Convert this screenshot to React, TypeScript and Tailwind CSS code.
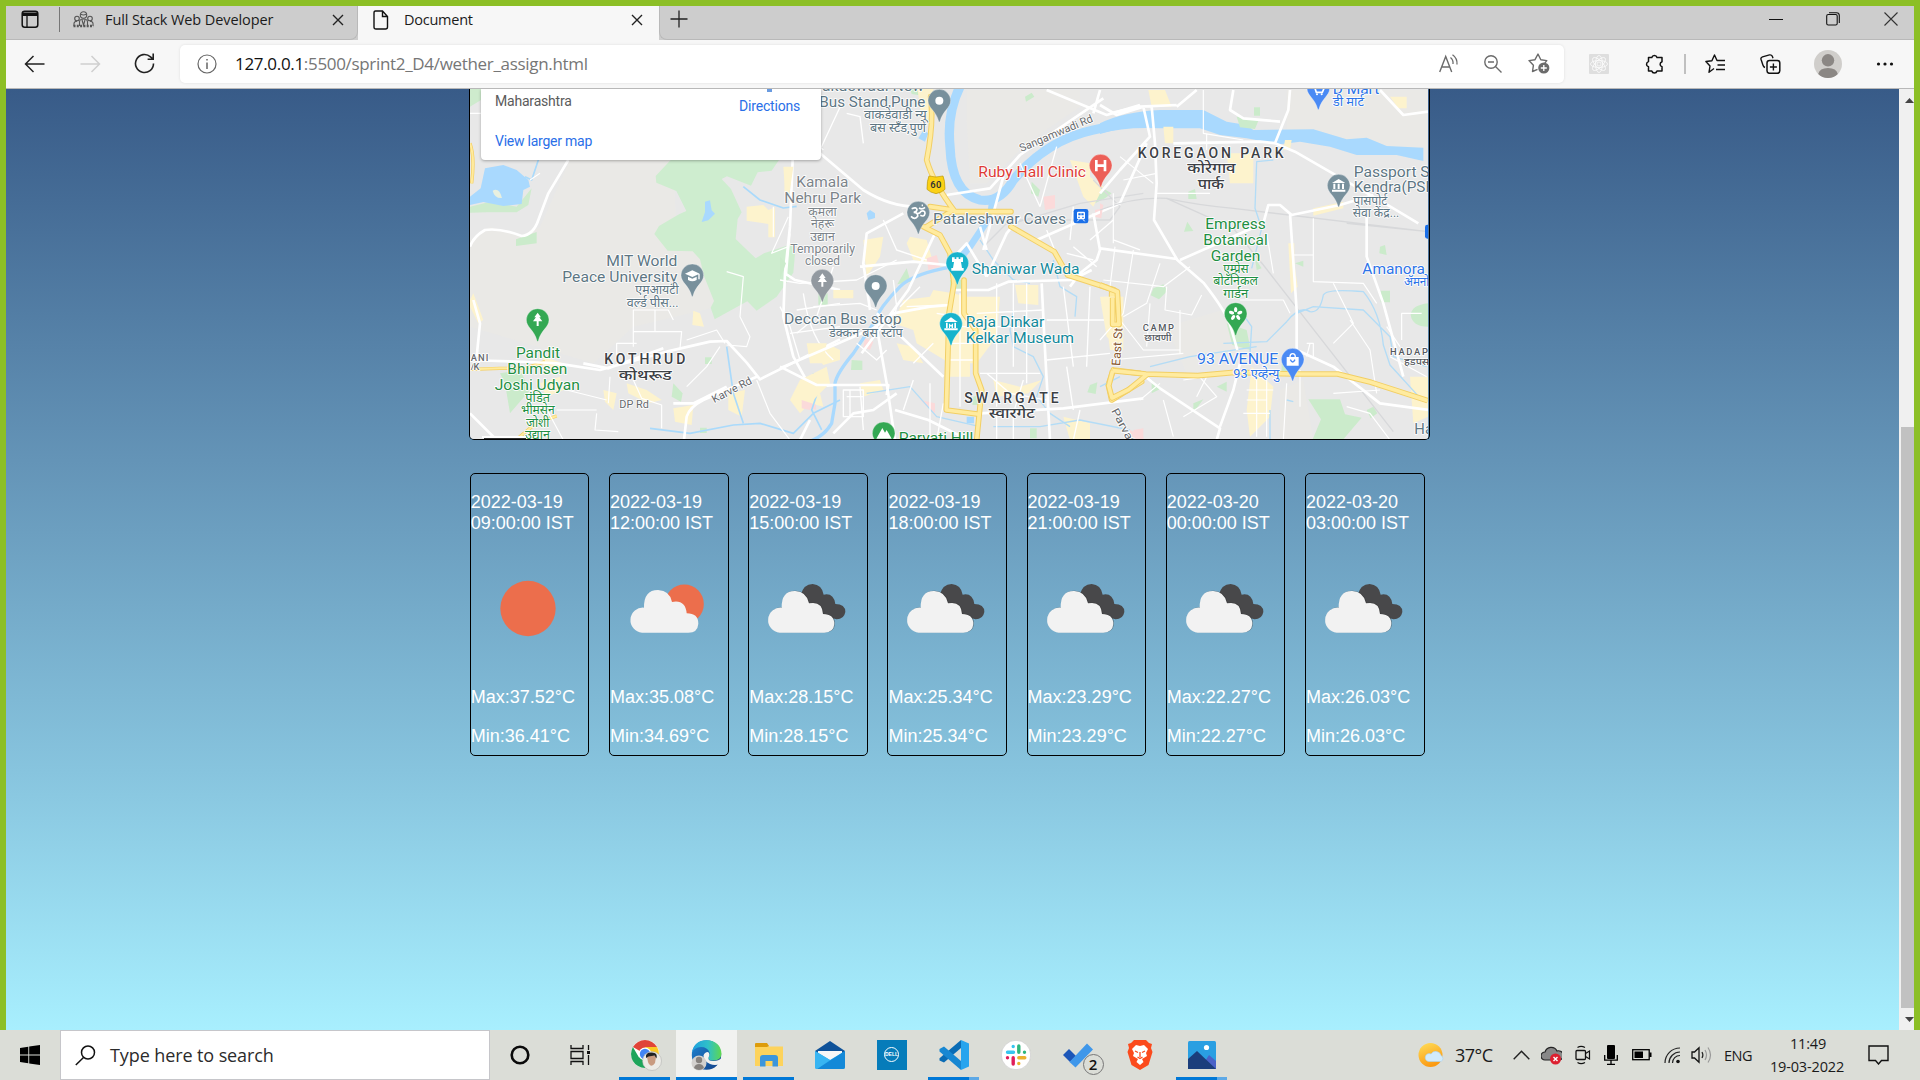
import React from "react";

const UI = "font-['Open_Sans',sans-serif]";

/* ---------- helpers ---------- */
type IcoProps = { w: number; h: number; vb?: string; className?: string; children: React.ReactNode };
function Ico({ w, h, vb, className = "", children }: IcoProps) {
  return (
    <svg width={w} height={h} viewBox={vb ?? `0 0 ${w} ${h}`} fill="none" className={`block shrink-0 ${className}`}>
      {children}
    </svg>
  );
}

function CloseX({ className = "" }: { className?: string }) {
  return (
    <Ico w={12} h={12} className={className}>
      <path d="M1 1l10 10M11 1L1 11" stroke="#222" strokeWidth="1.4" />
    </Ico>
  );
}

/* ---------- browser chrome ---------- */
function TabBar() {
  return (
    <div className={`flex h-[34px] bg-[#cdcdcd] ${UI} text-[14.5px] text-[#1b1b1b]`}>
      <div className="flex h-full w-[352px] items-center rounded-br-lg border-b border-r border-[#b9b9b9] pb-[6px]">
        <Ico w={18} h={19} className="ml-[15px]">
          <rect x="1.2" y="1.2" width="15.6" height="16" rx="2.5" stroke="#111" strokeWidth="1.5" />
          <path d="M1 2.5h16V6H1z" fill="#111" />
          <path d="M6 6v11" stroke="#111" strokeWidth="1.3" />
        </Ico>
        <div className="ml-[20px] h-[25px] w-px bg-[#777]" />
        <Ico w={21} h={17} className="ml-[13px]">
          <g stroke="#555" strokeWidth="1.1">
            <circle cx="10.500" cy="4" r="3.200" />
            <circle cx="4" cy="7.500" r="2.300" />
            <circle cx="17" cy="7.500" r="2.300" />
            <path d="M7.800 3.300q2.700 1.500 5.400 0M6.500 15V11q0-3 4-3t4 3v4M1 15v-2.500q0-2 3-2.200M20 15v-2.500q0-2-3-2.200M9 9l1.500 5L12 9" />
            <path d="M0.500 15h20" strokeDasharray="2 1.300" strokeWidth="2.500" />
          </g>
        </Ico>
        <span className="ml-[11px] w-[168px] whitespace-nowrap tracking-[-0.09px]">Full Stack Web Developer</span>
        <CloseX className="ml-[59px]" />
      </div>
      <div className="flex h-full w-[301px] items-center bg-[#f7f7f7] pb-[7px]">
        <Ico w={16} h={20} className="ml-[15px]">
          <path d="M2.500 1h7L14.500 6.500V17q0 2-2 2h-9.500q-2 0-2-2V3q0-2 1.500-2zM9.500 1v5.500h5" stroke="#111" strokeWidth="1.400" />
        </Ico>
        <span className="ml-[15px] w-[70px] whitespace-nowrap tracking-[-0.25px]">Document</span>
        <CloseX className="ml-[157px]" />
      </div>
      <div className="flex h-full flex-1 items-center rounded-bl-lg border-b border-l border-[#b9b9b9] pb-[7px]">
        <Ico w={18} h={18} className="ml-[10px]">
          <path d="M9 0.500v17M0.500 9h17" stroke="#222" strokeWidth="1.300" />
        </Ico>
        <div className="flex-1" />
        <Ico w={14} h={14}>
          <path d="M0 7.500h14" stroke="#111" />
        </Ico>
        <Ico w={14} h={14} className="ml-[43px]">
          <rect x="0.700" y="2.500" width="10.500" height="10.500" rx="1.500" stroke="#111" strokeWidth="1.100" />
          <path d="M3 0.700h7.500q2.800 0 2.800 2.800V11" stroke="#111" strokeWidth="1.100" />
        </Ico>
        <Ico w={14} h={14} className="ml-[44px] mr-[16px]">
          <path d="M0.500 0.500l13 13M13.500 0.500l-13 13" stroke="#333" strokeWidth="1.100" />
        </Ico>
      </div>
    </div>
  );
}

function Toolbar() {
  return (
    <div className="flex h-[49px] items-center border-b border-[#b8b8b8] bg-[#f7f7f7] pb-px">
      <Ico w={21} h={18} className="ml-[18px]">
        <path d="M20.500 9H1.500M9.500 1L1.500 9l8 8" stroke="#222" strokeWidth="1.500" />
      </Ico>
      <Ico w={21} h={18} className="ml-[35px]">
        <path d="M0.500 9h19M11.500 1l8 8-8 8" stroke="#cfcfcf" strokeWidth="1.500" />
      </Ico>
      <Ico w={21} h={21} className="ml-[33px]">
        <path d="M19.500 10.500a9 9 0 1 1-3-6.700l2.500 2.200M19.200 0.500V6.200h-5.600" stroke="#222" strokeWidth="1.600" />
      </Ico>
      <div className="ml-[25px] flex h-[38px] w-[1384px] items-center rounded-[5px] bg-white shadow-[0_0_3px_rgba(0,0,0,0.10)]">
        <Ico w={20} h={20} className="ml-[17px]">
          <circle cx="10" cy="10" r="9" stroke="#666" strokeWidth="1.200" />
          <path d="M10 8.500V15M10 5v1.600" stroke="#666" strokeWidth="1.500" />
        </Ico>
        <span className={`ml-[18px] whitespace-nowrap ${UI} text-[17px] leading-none tracking-[-0.32px] text-[#767676]`}>
          <span className="text-[#111]">127.0.0.1</span>:5500/sprint2_D4/wether_assign.html
        </span>
        <div className="flex-1" />
        <Ico w={20} h={19}>
          <path d="M0.700 18L6.700 2.500 12.700 18M2.800 13h7.800" stroke="#6b6b6b" strokeWidth="1.400" />
          <path d="M11.500 3.500q3 2.500 2.500 6.500M13.500 0.800q5 3.500 4.500 9.700" stroke="#6b6b6b" strokeWidth="1.300" />
        </Ico>
        <Ico w={18} h={18} className="ml-[25px]">
          <circle cx="7" cy="7" r="6.200" stroke="#6b6b6b" strokeWidth="1.400" />
          <path d="M11.500 11.500l6 6M4 7h6" stroke="#6b6b6b" strokeWidth="1.400" />
        </Ico>
        <Ico w={22} h={21} className="ml-[26px] mr-[14px]">
          <path d="M9.500 16.300l-5 2.200 0.900-6.200L1 7.600l6-0.900L10 1l2.800 5.700 6 0.900-2 2.400" stroke="#6b6b6b" strokeWidth="1.400" strokeLinejoin="round" />
          <circle cx="15.800" cy="15" r="5.600" fill="#6b6b6b" />
          <path d="M15.800 12v6M12.800 15h6" stroke="#fff" strokeWidth="1.300" />
        </Ico>
      </div>
      <Ico w={20} h={20} className="ml-[25px]">
        <rect width="20" height="20" rx="1" fill="#dedede" />
        <g stroke="#fff" strokeWidth="0.700">
          <circle cx="10" cy="10" r="2" />
          <ellipse cx="10" cy="10" rx="8.500" ry="3.500" />
          <ellipse cx="10" cy="10" rx="8.500" ry="3.500" transform="rotate(45 10 10)" />
          <ellipse cx="10" cy="10" rx="8.500" ry="3.500" transform="rotate(90 10 10)" />
          <ellipse cx="10" cy="10" rx="8.500" ry="3.500" transform="rotate(135 10 10)" />
        </g>
      </Ico>
      <Ico w={19} h={20} className="ml-[36px]">
        <path d="M3.500 3.500h3.300a2.700 2.700 0 0 1 5.200 0H17v4.200a2.600 2.600 0 0 0 0 5V17h-5a2.700 2.700 0 0 1-5.200 0H3.500v-4.200a2.700 2.700 0 0 1 0-5.200z" stroke="#111" strokeWidth="1.500" strokeLinejoin="round" />
      </Ico>
      <div className="ml-[20px] h-[20px] w-[1.500px] bg-[#c0c0c0]" />
      <Ico w={21} h={20} className="ml-[19px]">
        <path d="M9 14.500L4 18.300l1-6.300L0.900 7.500l6-0.800L9.500 1 12 6.500h8M12.500 11H20M11 15.500h9" stroke="#111" strokeWidth="1.400" strokeLinejoin="round" />
      </Ico>
      <Ico w={21} h={20} className="ml-[34px]">
        <rect x="7" y="6.500" width="12.800" height="12.800" rx="2.500" stroke="#111" strokeWidth="1.500" />
        <path d="M13.400 9.500v7M9.900 13h7M5 13.500Q3.500 13 2.900 11L1 5.300Q0.500 3.500 2.500 2.800L9.500 0.900q2-0.300 2.900 1.500l0.600 1.800" stroke="#111" strokeWidth="1.400" />
      </Ico>
      <Ico w={28} h={28} className="ml-[33px]">
        <circle cx="14" cy="14" r="14" fill="#d0cecb" />
        <circle cx="14" cy="10.300" r="6.200" fill="#8b8784" />
        <path d="M4.200 24Q5.500 18 14 18t9.800 6a14 14 0 0 1-19.600 0z" fill="#8b8784" />
      </Ico>
      <Ico w={18} h={4} className="ml-[34px]">
        <circle cx="2.500" cy="2" r="1.600" fill="#111" />
        <circle cx="9" cy="2" r="1.600" fill="#111" />
        <circle cx="15.500" cy="2" r="1.600" fill="#111" />
      </Ico>
    </div>
  );
}

/* ---------- map ---------- */
type LabelProps = {
  x: number; y: number; w?: number; s?: number; c?: string; b?: boolean; r?: number; children: string;
};
function L({ x, y, w, s = 45, c = "#5d7683", b, r, children }: LabelProps) {
  return (
    <text
      x={x} y={y} fontSize={s} fill={c} fontWeight={b ? 500 : 400} textLength={w} lengthAdjust="spacingAndGlyphs"
      fontFamily="Roboto, 'Noto Sans', sans-serif" stroke="#fff" strokeWidth="5" strokeLinejoin="round" paintOrder="stroke"
      transform={r ? `rotate(${r} ${x} ${y})` : undefined}
    >
      {children}
    </text>
  );
}

/* Place-name capitals are letter-spaced rather than stretched. */
function Area({ x, y, w, s = 42, c = "#3c4045", children }: { x: number; y: number; w: number; s?: number; c?: string; children: string }) {
  return (
    <text
      x={x} y={y} fontSize={s} fill={c} fontWeight={500} textLength={w} lengthAdjust="spacing"
      fontFamily="Roboto, sans-serif" stroke="#fff" strokeWidth="5" strokeLinejoin="round" paintOrder="stroke"
    >
      {children}
    </text>
  );
}

function Pin({ x, y, c, children }: { x: number; y: number; c: string; children?: React.ReactNode }) {
  return (
    <g transform={`translate(${x} ${y})`}>
      <path d="M-34 0A34 34 0 1 1 34 0C34 22 10 30 2 62Q0 66-2 62C-10 30-34 22-34 0z" fill={c} stroke="#fff" strokeOpacity=".5" strokeWidth="2" />
      {children}
    </g>
  );
}

const GREEN = "#1f8f43";
const BLUE = "#2d74e8";
const TEAL = "#12899b";
const DARK = "#3c4045";
const tree = "M0-22l10 14h-5l9 12H-14L-5-8h-5zM-3 4h6v14h-6z";

function MapDrawing() {
  return (
    <svg width="958" height="350" viewBox="470 89 958 350" className="block">
      <rect x="470" y="89" width="960" height="352" fill="#e8e8e8" />

      {/* west */}
      <g transform="translate(460 80) scale(.33333)" fill="none" strokeLinejoin="round">
        <path d="M330 240H640L650 480 740 540 770 680 520 740 400 850 30 740V480L90 440 180 468 240 440z" fill="#eae9e6" />
        <path d="M0 20H63V60L30 80zM30 380l60-15 80 15 45-55-10 50-35 22H80L30 398z" fill="#ceebcd" />
        <path d="M632 240h325l-22 32-42 5-20 40-72-28-16 8 28 30 32 70-12 20-6 60 60 58 25-15 96-32-8 90-50 72-60 42-28-28-98 54-12-35 10-20-30-75-12-50-22-24-75-2-40-50 14-24 60-35 22-10-30-60-60-25-2-20z" fill="#ceedcf" />
        <path d="M168 478l62-22v34l-62 8zM120 880l60-10 30 60-60 70-15-90zM640 910l28 30-5 25-28-15zM735 832h20v20h-20zM720 1043h20v16h-20zM1075 640h28v34h-28z" fill="#cbebcb" />
        <path d="M30 350L62 325 75 265 130 255 170 270 205 300 210 320 190 330 185 372 130 378 70 366 30 375zM735 365l15-4 5 30 10 10-20 20-20 5 10-30z" fill="#a9d9fe" />
        <path d="M98 332q20-10 28 22-22 2-28-22z" fill="#e8f0e0" />
        <path d="M860 380l50-5 15 15 20-8v90h-20v-40l-65-10zM975 280h18l-5 60h-15zM1060 820l60-20 20 10v30l-50 15zM640 985l60-10-5 60-50-10zM805 940l50-10-10 80-40-20zM500 910l60 20 45 30-40 10-60-30zM430 930l40 10-10 50-25-25zM700 692l20 8 12 40-35-5zM250 830l60 20v24l-60-10zM40 640l30 80-15 10-30-60zM240 910l60-20 10 40-50 20zM1020 900l60 40 10 40-40-10z" fill="#fdf3cd" />
        <path d="M1030 962l38 12v15l-38-10z" fill="#fbdada" />
        <path d="M30 190q15 40 5 120M30 868l90-3 75 0 60-20M170 1078l60-50 60-20" stroke="#f5cf62" strokeWidth="10" />
        <path d="M30 190q15 40 5 120M30 868l90-3 75 0 60-20M170 1078l60-50 60-20" stroke="#ffeb9e" strokeWidth="6" />
        <path d="M235 240l-20 60-20-10M850 320l50 40 70 24 40-5M570 1045l120 15 130-25 80-5 100 30 60-60 80-40M800 800l20 140 30 90M1060 880l15 50-20 60 30 60" stroke="#aadafb" strokeWidth="5" />
        <path d="M325 240l-60 100-30 80q-15 45-50 48-65-25-110-18-35 20-45 50M998 240l-8 200-15 140 30 20 135 30M975 580l-5 130 30 120 50 90 80-5M30 840q160 5 260 10l130 20 200-55 130-30 50-2 60 65 40 50 100-50 140-70M890 890l-160 70q-40 20-50 50l-8 70M370 850l75 15 165-60M640 970h60l100-50M30 1000l80 80M40 660l20 70-10 100" stroke="#fff" strokeWidth="8" />
        <path d="M520 800V690h65v65h-65M520 755h145l-5 50M585 690h40l15 30M470 840v-50h60M680 780l90-30 25 40M520 900l25 55 60 20v70M445 970l5-80M410 1000l-5 50 70 5M240 950l70 130M320 930l120 30M800 575l50 15-10 120 30 60-10 30-60-5M985 500l-50 20 50-110M940 380v90M30 100h35M210 300l30-20M290 990h120M560 880l60 0M780 800l-40 60-60 60M890 900l40 100 60 80" stroke="#fff" strokeWidth="3.500" />
        <path d="M1030 640q20 140 90 200M1010 690l130-20M990 760l150-20" stroke="#fff" strokeWidth="4" />
      </g>

      {/* centre */}
      <g transform="translate(780 80) scale(.33333)" fill="none" strokeLinejoin="round">
        <path d="M560 30H900V80L740 190 620 310 570 310 560 120z" fill="#eae9e6" />
        <path d="M390 25h65l-10 25-50-8zM735 50l20-12 8 12-25 15zM380 565l12 40-40 8zM215 840l32 2v28h-34zM930 915l22-8-5 35-25-5zM755 305l25 25-5 20-22-10zM510 600h45v28h-45zM580 950l25-10v35h-28zM750 1045h20v30h-20zM0 530l18 20-18 45zM960 320l35 20-20 15-30 15z" fill="#cbebcb" />
        <path d="M370 660l80-10 10-20 60 10 40 10h100l-10 120-60 80h-80l-100-60-10-40-60-20zM705 615h70v60l-60-5zM640 900l80 20 65-20-40 40-95 10zM870 240l60 10v40l40 30-30 60-30-30zM250 480l60-10-10 60-40 60zM10 260h30l-10 70H15zM160 630h60v25h-60zM390 470l50 10 20 70-60-10-20-50zM970 650h60v160h-40zM60 900l80-40 10 50-90 90-30-40zM350 790l50 10 30 50-60-10zM510 845l60 5v40h-60zM410 10h50v80l-30 60zM80 790l60 0-10 60h-40zM240 910l60-10 10 30-60 20zM850 1010l80 20v50h-60z" fill="#fdf3cd" />
        <path d="M790 350l35-5v40l-30 5zM440 535l30-10 10 35-35 10zM945 390l22-5-3 30-20-5zM255 775l25 10-10 25-20-8zM65 960l30 10-5 20-25-5zM1050 1050l40 20v12h-40zM420 960l45 10v30z" fill="#fbdada" />
        <path d="M540 20q-40 80-30 180 5 140 90 160 60 10 100-60 100-120 240-150l140-30" stroke="#a9d9fe" strokeWidth="28" />
        <path d="M640 350L630 410 570 500 540 535" stroke="#a9d9fe" strokeWidth="20" />
        <path d="M560 510L520 560q-120 20-160 60-60 60-80 110l-60 90q-50 60-55 90v60l-10 60q-30 50-90 60" stroke="#a9d9fe" strokeWidth="10" />
        <path d="M260 400l10-10 15 10v14l-20 6zM430 150l15 10-10 25-20-10zM560 1010h22v20h-22z" fill="#a9d9fe" />
        <path d="M600 480l40 60 60 60 50 10M700 690l-10 60 10 50 60 30 30 60-20 60 40 50 60 40M820 540l20 80 50 30-5 60M640 1040l140 0 120-20 150 30M260 940l130-20 80 90 130 30" stroke="#b3dcf6" strokeWidth="4" />
        <path d="M940 300l80 80-30 40-300 0-80 80M700 430l200-60 190-30" stroke="#d9dadc" strokeWidth="4" />
        <g stroke="#fff" strokeWidth="8">
          <path d="M120 220l130 110q80 50 160 50M0 865l210-90 70-30 60-45 110-20 60-5M290 740l30 170 25 170M290 700l200 190M0 860l110 55h215l-5 30M245 820l140-190 80-170M370 400l-110 60-10 90 20 140M240 560l160-15 100 10 60-65 60 100M515 630h110l60-25 190-5 60-30M620 590l60-130 40-50M500 345l130-20 90-100 250-170M770 480l250-110 80-180M940 400l20 110-10 30-50 40-30 40M670 290l-60 220M600 440l20 70M800 30l180 75 100-30M960 30l-20 70M600 1000l250-15 240-30M785 610l10 200 15 270M350 940l-70 50-60 10-60 60M345 990l100 30 120 60M60 1080l30-60" />
        </g>
        <g stroke="#fff" strokeWidth="4">
          <path d="M130 210l-60-60M190 60l-70 150M200 100l40 10 10 80M0 600l60 10 170-10 120-60M60 840l-30-100-30-60M100 680l140-10 50 20M160 560l-50 150-60 50M30 460L20 580M310 420l40 90 90 30M380 680l120-5M420 620l-60 60M340 600l10 80-20 90M400 850l60-60M470 700l30 5M510 740h80M510 790h80M510 840h70M540 640v340M650 610v370M590 700l200-10M600 740h190M600 880h180M700 610v250M740 610v300M850 620l30 240M800 720h190M800 840l190-20M860 860l20 130M930 620l-10 240M730 900l-30 100v80M880 500l70 60M800 450l40 100 60 30M860 520l80 20M720 250l60 130M830 200l-50 180M880 380l-10 100M1000 420l-70 60M1000 480l80 30M230 790l60 50 30-30M190 930h60v80h-60zM200 950h50M210 930v80M240 920l10 130M400 900l-30 90M450 910v170M490 970l-20 110M620 880l70 60 110 20M650 1000v80M900 990l-20 90" />
        </g>
        <g strokeLinecap="round">
          <path d="M452 50q10 80-12 190 20 70 85 155h168M450 380l70 10M430 440l50 25 30 55 12 90-15 90-8 290 92 12M552 600l0 100 35 50v130l18 50-15 150M693 440l130 75 40 70 140 45 10 100h-18v-90M1000 870l80 10M1000 870l-15 45 10 45 90-55M440 440l80-50" stroke="#f2cf65" strokeWidth="17" />
          <path d="M452 50q10 80-12 190 20 70 85 155h168M450 380l70 10M430 440l50 25 30 55 12 90-15 90-8 290 92 12M552 600l0 100 35 50v130l18 50-15 150M693 440l130 75 40 70 140 45 10 100h-18v-90M1000 870l80 10M1000 870l-15 45 10 45 90-55M440 440l80-50" stroke="#ffeb9f" strokeWidth="11" />
        </g>
      </g>

      {/* east */}
      <g transform="translate(1100 80) scale(.33333)" fill="none" strokeLinejoin="round">
        <path d="M560 30H990V210L730 190 560 150zM540 930l70-30 30 180H540zM200 740l200-60 50 180-190 20z" fill="#eae9e6" />
        <path d="M0 130Q70 95 180 90l130 0 70 35 60 10 20 15 180-2 100 30 60-5 60 25 110 5v40l-80-18-120 0-80-25-90-15-60 8-100-18-80-10-60-20-120 0Q70 140 0 162z" fill="#a9d9fe" />
        <path d="M410 110l65 12-10 25-45-5zM462 82h18v25h-18zM265 335l20-8 5 30h-25zM262 425l18 28-28 2zM160 625l30-12 12 20-25 25-25-12zM380 730l60 20 12 60-55-15zM625 958h95l15 45 50 10-55 65h-92l25-60zM840 500l15-5 5 30-22-5zM842 632h28v35h-28zM985 670q-50 5-53 35 5 35 53 35zM800 990l20-10 12 20-20 15zM350 920l30-15v30zM280 970l30-12-30 40zM545 845h50v30h-50zM585 550l25-8v18zM465 535l20 30-15 5zM155 900l30 25-30 15z" fill="#cbebcb" />
        <path d="M380 220l80 0v90h-70zM190 140h30v50h-25zM145 30h50l20 50-60 0zM565 490h18v60l10 70-20 20zM640 385l90-20v20l-90 22zM455 860l65 60-10 90-60 60-10-80zM930 890h55v120l-45 20zM870 50h50v35h-25zM0 650h65v160L20 770zM555 180h20l-5 30h-20z" fill="#fdf3cd" />
        <path d="M100 1050l30-5v30h-25zM0 370l10 5-5 30-5 0z" fill="#fbdada" />
        <path d="M0 390q100-40 200-35 90 20 200 30 250 30 585 70M200 355l200 90 90 110 390 500M740 430l245 25" stroke="#d7d8da" strokeWidth="4" />
        <path d="M520 240l-50 5-5 140 20 60-30 120M370 790l130-5 60-60q40-50 70-30 30 5 40-50 10-20 120-10 50 60 60 160l20 60 100 110M590 700l50-20 150 10 80 80 10 60 100 30M150 860l120-30 200-30M0 920l60-30M420 690l35 50-5 80M560 960l20 5M510 990v90" stroke="#b3dcf6" strokeWidth="4" />
        <g stroke="#fff" strokeWidth="8">
          <path d="M30 100l90-20 110-5M130 80l20 90-90 100-60 70M155 80l10 110 5 120-8 110 70 120 80 70q70 90 80 130l20 70M240 540l250-110 15-55h35l35 30 145-30 100-30M0 505l230 32M570 400l20 290 0 150M570 30l-5 60-40 100 60 25 130 75 140 80 100 60M530 190l-50-5-260 5M400 30l-10 60 40 25 110 10M800 410v120l50 140M130 885l50 40 180 120-10 35M420 850l-20 80-40 110M590 810l110 50 140 110 145 20M850 670l60 220M0 75l50 30 80-25M230 80l60-50M840 30l70 75 75-10" />
        </g>
        <g stroke="#fff" strokeWidth="3.500">
          <path d="M45 500l-15 120M100 510l-30 190-70 80M180 550l-40 120-70 40M10 600l180 20 80-60M200 620l-5 70 80 15 30-60M60 720l70 90 110 0M150 670l-10 130M240 690v130M30 840l220-20M60 230l100 80M40 340v150M70 300l100-20M170 340h160M310 30l0 130 120 20M320 160v50M580 525h60l0 80 150 5 40 60M500 460l20 120M640 525v-110M700 610l60 120-60 60M750 720l60 90 20 130M290 880l60 70-100 60M250 900l70-10-30 60M190 960l30 110M120 960l60-50M860 740l40 60M905 780v-80h60M440 930h80M440 960h60M430 1000h80M470 900v170M500 890v180M620 830l10-40M620 790h20v40M560 910l-10 170M700 940l140-10M870 830l110 60M740 980l70 20 60 80M600 870v110M420 660h130l20 40" />
        </g>
        <path d="M0 615l52 20 5 98H38v-80M38 872l100 10 155 5 110-10 180 5h130l100 25 170 55M38 872l-12 45 10 37 50-25 55-45" stroke="#f2cf65" strokeWidth="17" />
        <path d="M0 615l52 20 5 98H38v-80M38 872l100 10 155 5 110-10 180 5h130l100 25 170 55M38 872l-12 45 10 37 50-25 55-45" stroke="#ffeb9f" strokeWidth="11" />
      </g>

      {/* west labels */}
      <g transform="translate(460 80) scale(.33333)">
        <L x={439} y={557} w={213}>MIT World</L>
        <L x={307} y={605} w={345}>Peace University</L>
        <L x={526} y={643} w={130} s={38}>एमआयटी</L>
        <L x={500} y={680} w={156} s={38}>वर्ल्ड पीस...</L>
        <L x={168} y={835} w={132} c={GREEN}>Pandit</L>
        <L x={142} y={882} w={180} c={GREEN}>Bhimsen</L>
        <L x={104} y={929} w={256} c={GREEN}>Joshi Udyan</L>
        <L x={196} y={966} w={74} s={38} c={GREEN}>पंडित</L>
        <L x={183} y={1003} w={101} s={38} c={GREEN}>भीमसेन</L>
        <L x={198} y={1040} w={70} s={38} c={GREEN}>जोशी</L>
        <L x={195} y={1077} w={75} s={38} c={GREEN}>उद्यान</L>
        <Area x={433} y={853} w={243}>KOTHRUD</Area>
        <L x={476} y={899} w={159} s={42} b c={DARK}>कोथरूड</L>
        <L x={478} y={983} w={89} s={33} c="#66696d">DP Rd</L>
        <L x={763} y={970} w={130} s={33} c="#66696d" r={-28}>Karve Rd</L>
        <Area x={32} y={843} w={53} s={28} c="#66696d">ANI</Area>
        <Area x={32} y={871} w={26} s={28} c="#66696d">/K</Area>
        <Pin x={697} y={586} c="#78909c">
          <path d="M-22-5L0-15 22-5 0 5zM-13 4L0 10 13 4V14Q0 22-13 14zM18-4h4V12h-4z" fill="#fff" />
        </Pin>
        <Pin x={233} y={720} c="#34a853"><path d={tree} fill="#fff" /></Pin>
        <Pin x={1087} y={602} c="#9299a0"><path d={tree} fill="#fff" /></Pin>
        <path d="M66 1068h132v6H66z" fill="#fff" />
        <path d="M72 1074h126v6H72z" fill="#333" />
      </g>

      {/* centre labels */}
      <g transform="translate(780 80) scale(.33333)">
        <L x={85} y={34} w={347}>Wakdewadi New</L>
        <L x={118} y={80} w={318}>Bus Stand,Pune</L>
        <L x={252} y={118} w={188} s={38}>वाकडेवाडी न्यू</L>
        <L x={270} y={155} w={168} s={38}>बस स्टँड,पुणे</L>
        <L x={49} y={320} w={156} c="#7c848a">Kamala</L>
        <L x={13} y={368} w={230} c="#7c848a">Nehru Park</L>
        <L x={85} y={407} w={85} s={38} c="#7c848a">कमला</L>
        <L x={93} y={445} w={69} s={38} c="#7c848a">नेहरू</L>
        <L x={91} y={482} w={73} s={38} c="#7c848a">उद्यान</L>
        <L x={31} y={518} w={194} s={37} c="#7c848a">Temporarily</L>
        <L x={75} y={556} w={105} s={37} c="#7c848a">closed</L>
        <L x={12} y={732} w={353}>Deccan Bus stop</L>
        <L x={147} y={770} w={221} s={38}>डेक्कन बस स्टॉप</L>
        <L x={459} y={431} w={399}>Pataleshwar Caves</L>
        <L x={595} y={292} w={323} c="#de3b36">Ruby Hall Clinic</L>
        <L x={724} y={216} w={236} s={33} c="#66696d" r={-23}>Sangamwadi Rd</L>
        <L x={575} y={583} w={324} c={TEAL}>Shaniwar Wada</L>
        <L x={557} y={741} w={236} c={TEAL}>Raja Dinkar</L>
        <L x={557} y={789} w={325} c={TEAL}>Kelkar Museum</L>
        <Area x={553} y={969} w={283}>SWARGATE</Area>
        <L x={626} y={1014} w={139} s={42} b c={DARK}>स्वारगेट</L>
        <L x={1020} y={858} w={114} s={36} c="#84552c" r={-86}>East St</L>
        <L x={356} y={1090} w={224} c={GREEN}>Parvati Hill</L>
        <L x={993} y={992} w={125} s={33} c="#66696d" r={62}>Parvati</L>
        <path d="M447 288q20 6 42 0 6 12 6 40-10 10-27 13-17-3-27-13 0-28 6-40z" fill="#fbd116" stroke="#b99500" strokeWidth="2" />
        <text x="451" y="324" fontSize="28" fontFamily="Roboto" fontWeight="600" fill="#333" textLength="33">60</text>
        <Pin x={478} y={62} c="#78909c"><circle r="12" fill="#fff" /></Pin>
        <Pin x={287} y={618} c="#78909c"><circle r="12" fill="#fff" /></Pin>
        <Pin x={415} y={398} c="#78909c">
          <path d="M-20-12q14-6 16 2 0 8-10 9 14 0 12 12-8 12-20 0M-6 2q10 2 14-6 12-4 12 6-2 12-14 6M2-14q10 6 18-2M10-22h4" stroke="#fff" strokeWidth="5" fill="none" />
        </Pin>
        <Pin x={532} y={550} c="#17b3cc">
          <path d="M-16-18h8v5h5v-5h7v5h5v-5h8v14H11l3 18h5v8h-37v-8h5l3-18h-6z" fill="#fff" />
        </Pin>
        <Pin x={513} y={732} c="#17b3cc">
          <path d="M0-20L20-6H-20zM-15-4h5v16h-5zM10-4h5v16h-5zM-20 13h40v6h-40zM-6 12V-2l6 6 6-6v14h-4V5L0 10l-3-5v7z" fill="#fff" />
        </Pin>
        <Pin x={962} y={257} c="#ec5f57">
          <path d="M-13-17v34M13-17v34M-13 0h26" stroke="#fff" strokeWidth="8" />
        </Pin>
        <Pin x={311} y={1060} c="#34a853"><path d="M-22 16L-4-16 4-2l5-8L24 16z" fill="#fff" /></Pin>
        <rect x="881" y="387" width="44" height="43" rx="7" fill="#1a6fe8" />
        <rect x="891" y="395" width="24" height="23" rx="4" fill="#fff" />
        <path d="M895 400h7v6h-7zM904 400h7v6h-7zM895 410h4v4h-4zM907 410h4v4h-4z" fill="#1a6fe8" />
        <path d="M892 424l5-6M914 424l-5-6" stroke="#fff" strokeWidth="3" />
      </g>

      {/* east labels */}
      <g transform="translate(1100 80) scale(.33333)">
        <L x={698} y={42} w={140} c={BLUE}>D Mart</L>
        <L x={698} y={78} w={94} s={38} c={BLUE}>डी मार्ट</L>
        <Area x={113} y={233} w={438}>KOREGAON PARK</Area>
        <L x={262} y={279} w={145} s={42} b c={DARK}>कोरेगाव</L>
        <L x={293} y={326} w={79} s={42} b c={DARK}>पार्क</L>
        <L x={761} y={290} w={228}>Passport S</L>
        <L x={761} y={337} w={244}>Kendra(PSK</L>
        <L x={760} y={374} w={102} s={38}>पासपोर्ट</L>
        <L x={758} y={412} w={140} s={38}>सेवा केंद्र...</L>
        <L x={316} y={448} w={181} c={GREEN}>Empress</L>
        <L x={310} y={495} w={193} c={GREEN}>Botanical</L>
        <L x={332} y={542} w={149} c={GREEN}>Garden</L>
        <L x={370} y={580} w={76} s={38} c={GREEN}>एम्प्रेस</L>
        <L x={340} y={616} w={134} s={38} c={GREEN}>बोटॅनिकल</L>
        <L x={370} y={655} w={75} s={38} c={GREEN}>गार्डन</L>
        <L x={787} y={582} w={188} c={BLUE}>Amanora</L>
        <L x={912} y={618} w={76} s={38} c={BLUE}>ॲमनो</L>
        <Area x={128} y={754} w={94} s={28} c="#55595e">CAMP</Area>
        <L x={133} y={784} w={82} s={30} b c="#55595e">छावणी</L>
        <L x={291} y={853} w={244} c={BLUE}>93 AVENUE</L>
        <L x={400} y={893} w={138} s={38} c={BLUE}>93 एव्हेन्यु</L>
        <Area x={870} y={825} w={114} s={28} c="#55595e">HADAP</Area>
        <L x={912} y={856} w={76} s={30} b c="#55595e">हडपस</L>
        <L x={943} y={1063} w={56}>Ha</L>
        <Pin x={655} y={25} c="#4a8af4">
          <path d="M-20-6h8l6 18h18l6-14" stroke="#fff" strokeWidth="5" fill="none" />
          <circle cx="-4" cy="18" r="3" fill="#fff" /><circle cx="10" cy="18" r="3" fill="#fff" />
        </Pin>
        <Pin x={716} y={317} c="#78909c">
          <path d="M0-20L20-8H-20zM-16-6h6v16h-6zM-3-6h6v16h-6zM10-6h6v16h-6zM-20 12h40v6h-40z" fill="#fff" />
        </Pin>
        <Pin x={407} y={702} c="#34a853">
          <g fill="#fff">
            <ellipse cy="-13" rx="5" ry="8" />
            <ellipse cy="-13" rx="5" ry="8" transform="rotate(72)" />
            <ellipse cy="-13" rx="5" ry="8" transform="rotate(144)" />
            <ellipse cy="-13" rx="5" ry="8" transform="rotate(216)" />
            <ellipse cy="-13" rx="5" ry="8" transform="rotate(288)" />
          </g>
        </Pin>
        <Pin x={578} y={839} c="#4a8af4">
          <path d="M-18-8h36v26h-36z" fill="#fff" />
          <path d="M-8-8q0-10 8-10t8 10" stroke="#fff" strokeWidth="4" fill="none" />
          <path d="M-7 0q7 14 14 0" stroke="#4a8af4" strokeWidth="4" fill="none" />
        </Pin>
        <rect x="975" y="434" width="30" height="42" rx="7" fill="#1a6fe8" />
        <path d="M984 443h10v22h-10z" fill="#fff" />
      </g>
    </svg>
  );
}

function MapCard() {
  return (
    <div className="relative ml-[463px] h-[351px] w-[961px] overflow-hidden rounded-b-[5px] border border-t-0 border-black">
      <MapDrawing />
      <div className="absolute left-[11px] top-0 flex h-[71px] w-[340px] justify-between rounded-b-sm bg-white pl-[14px] pr-[21px] font-[Roboto] text-[14px] leading-[16px] shadow-[0_1px_3px_rgba(0,0,0,0.3)]">
        <div className="pt-[4px]">
          <div className="w-[76px] tracking-[-0.2px] text-[#5b5b5b]">Maharashtra</div>
          <div className="mt-[24px] tracking-[-0.24px] text-[#2a6fe8]">View larger map</div>
        </div>
        <div className="flex flex-col items-center text-[#2a6fe8]">
          <div className="h-[3px] w-[5px] bg-[#6a9be0]" />
          <div className="mt-[6px] tracking-[-0.2px]">Directions</div>
        </div>
      </div>
    </div>
  );
}

/* ---------- forecast ---------- */
type Kind = "sun" | "few" | "broken";
const DAYS: { d: string; t: string; k: Kind; max: string; min: string }[] = [
  { d: "2022-03-19", t: "09:00:00 IST", k: "sun", max: "37.52", min: "36.41" },
  { d: "2022-03-19", t: "12:00:00 IST", k: "few", max: "35.08", min: "34.69" },
  { d: "2022-03-19", t: "15:00:00 IST", k: "broken", max: "28.15", min: "28.15" },
  { d: "2022-03-19", t: "18:00:00 IST", k: "broken", max: "25.34", min: "25.34" },
  { d: "2022-03-19", t: "21:00:00 IST", k: "broken", max: "23.29", min: "23.29" },
  { d: "2022-03-20", t: "00:00:00 IST", k: "broken", max: "22.27", min: "22.27" },
  { d: "2022-03-20", t: "03:00:00 IST", k: "broken", max: "26.03", min: "26.03" },
];

/* Drawn at three units per pixel; the origin is the icon box's top left corner. */
function WeatherIcon({ kind }: { kind: Kind }) {
  return (
    <svg width="118" height="117" viewBox="0 0 354 351" className="block">
      {kind === "sun" && <circle cx="171" cy="169.500" r="83" fill="#ec6e4c" />}
      {kind === "few" && (
        <>
          <circle cx="223" cy="156" r="58.500" fill="#ec6e4c" />
          <path d="M96 242a37 37 0 1 1 6-75Q101 114 144 114q36 2 42 36 40-8 44 34 35 0 35 31-2 27-30 27z" fill="#f2f2f2" />
        </>
      )}
      {kind === "broken" && (
        <>
          <path d="M155 130q8-34 36-34 28 2 33 32 30-6 35 28 30 0 30 24-4 22-26 22l-50-12z" fill="#48484a" />
          <path d="M92 242a37 37 0 1 1 6-75Q97 116 139 117q34 2 41 37 40-8 42 32 34 0 34 30-2 26-30 26z" fill="#333" opacity=".5" transform="translate(2 -1)" />
          <path d="M92 242a37 37 0 1 1 6-75Q97 116 139 117q34 2 41 37 40-8 42 32 34 0 34 30-2 26-30 26z" fill="#f2f2f2" />
        </>
      )}
    </svg>
  );
}

function Forecast() {
  return (
    <div className="ml-[463.800px] mt-[33px] grid w-[954.900px] grid-cols-7 gap-x-[19.500px] font-['Liberation_Sans',Arial,sans-serif] text-[18px] leading-[21px] text-white">
      {DAYS.map((f) => (
        <div key={f.t} className="h-[283px] whitespace-nowrap rounded-[5px] border border-black pt-[18px]">
          <div>{f.d}</div>
          <div>{f.t}</div>
          <div className="mt-[18px] h-[117px]">
            <WeatherIcon kind={f.k} />
          </div>
          <div className="mt-[18px]">Max:{f.max}°C</div>
          <div className="mt-[18px]">Min:{f.min}°C</div>
        </div>
      ))}
    </div>
  );
}

function Page() {
  return (
    <div className="flex h-[941px]">
      <main className="w-[1893px] bg-[linear-gradient(180deg,#385b88_0%,#6494b7_39.500%,#87c4de_72.500%,#a8effe_100%)]">
        <MapCard />
        <Forecast />
      </main>
      <div className="flex flex-1 flex-col items-end bg-[#f0f0f0]">
        <Ico w={9} h={5} className="mt-[9px]"><path d="M0 5L4.500 0 9 5z" fill="#444" /></Ico>
        <div className="mt-[324px] h-[581px] w-[13px] bg-[#c1c1c1]" />
        <Ico w={9} h={5} className="mt-[9px]"><path d="M0 0L4.500 5 9 0z" fill="#444" /></Ico>
      </div>
    </div>
  );
}

/* ---------- taskbar ---------- */
type TaskProps = { w: string; ml: string; bar?: boolean; split?: boolean; active?: boolean; children: React.ReactNode };
function Task({ w, ml, bar, split, active, children }: TaskProps) {
  return (
    <div className={`relative flex h-[50px] items-center justify-center pb-px ${w} ${ml} ${active ? "bg-[#f1f2f0]" : ""}`}>
      {children}
      {bar && (
        <div className="absolute inset-x-0 bottom-0 flex h-[3px] bg-[#0078d7]">
          {split && <div className="ml-auto h-full w-[10px] bg-[#5ea9e6]" />}
        </div>
      )}
    </div>
  );
}

function Taskbar() {
  return (
    <div className={`flex h-[50px] items-center bg-[#dbddd7] ${UI} text-[#1a1a1a]`}>
      <Ico w={20} h={20} className="ml-[20px]">
        <path d="M0 3l8.300-1.200v7.700H0zM9.200 1.600L20 0v9.500H9.200zM0 10.400h8.300v7.800L0 17zM9.200 10.400H20V20L9.200 18.400z" fill="#000" />
      </Ico>
      <div className="ml-[20px] flex h-[50px] w-[430px] items-center border border-[#c6c6ca] bg-white">
        <Ico w={21} h={21} className="ml-[14px]">
          <circle cx="13" cy="7.500" r="6.500" stroke="#111" strokeWidth="1.500" />
          <path d="M8.500 12.500L0.800 20" stroke="#111" strokeWidth="1.500" />
        </Ico>
        <span className="ml-[14px] text-[18px] tracking-[-0.1px] text-[#2b2b2b]">Type here to search</span>
      </div>
      <Ico w={20} h={20} className="ml-[20px]">
        <circle cx="10" cy="10" r="8.300" stroke="#0a0a0a" strokeWidth="2.600" />
      </Ico>
      <Ico w={21} h={20} className="ml-[40px]">
        <path d="M1 0v3.500h12V0M1 20v-3.500h12V20M1 6.500h12v7H1zM18.500 0v5M18.500 10v10" stroke="#111" strokeWidth="1.300" />
        <path d="M17 6h3v3h-3z" fill="#111" />
      </Ico>

      <Task w="w-[51px]" ml="ml-[28px]" bar>
        <Ico w={32} h={32} className="ml-[2px]">
          <circle cx="15" cy="15" r="14" fill="#fff" />
          <path d="M15 15L2.900 8A14 14 0 0 1 27.100 8z" fill="#e04438" />
          <path d="M2.900 8A14 14 0 0 0 15 29l6-10.500L9 18.500z" fill="#1ea55b" />
          <path d="M27.100 8A14 14 0 0 1 15 29l6-10.500L15 8z" fill="#fbc824" />
          <circle cx="15" cy="15" r="6.500" fill="#fff" />
          <circle cx="15" cy="15" r="5.200" fill="#4285f4" />
          <circle cx="22" cy="22" r="9.500" fill="#ecebe6" stroke="#aaa" strokeWidth=".5" />
          <path d="M17 18q4-5 9 0l-1 6q-4 6-7-1z" fill="#c99b80" />
          <path d="M16 19q-1-6 6-5.500 6 0 4.500 6l-2-3-6 1z" fill="#222" />
        </Ico>
      </Task>
      <Task w="w-[61px]" ml="ml-[6px]" bar active>
        <Ico w={31} h={32}>
          <defs>
            <linearGradient id="edgeTop" x1="0" x2="1"><stop stopColor="#1f9fe0" /><stop offset=".55" stopColor="#2fc0c8" /><stop offset="1" stopColor="#5fd84e" /></linearGradient>
            <linearGradient id="edgeBase" x1="0" x2="1" y2="1"><stop stopColor="#1f86d4" /><stop offset="1" stopColor="#123f86" /></linearGradient>
          </defs>
          <circle cx="15.500" cy="16" r="14.700" fill="url(#edgeBase)" />
          <path d="M0.800 14Q3 1.300 15.500 1.300q14 0.700 15 13.500-0.500 6.700-8 6.700-6 0-5-3 2-2 1-5-2-5.500-8.500-5.500Q3 8.500 0.800 14z" fill="url(#edgeTop)" />
          <path d="M17.500 18.500q-1 3.500 5 3.500 5 0 8.500-3v5.500l-2 0.500q-5 1.800-10 0Q12 22 12.500 16.500q1-3.500 4.500-3.500 2.500 2 0.500 5.500z" fill="#f1f2f0" />
          <circle cx="8" cy="24" r="7.500" fill="#d3d1ce" />
          <circle cx="8" cy="21" r="3.200" fill="#86827e" />
          <path d="M3 29q1-4 5-4t5 4q-5 4-10 0z" fill="#86827e" />
        </Ico>
      </Task>
      <Task w="w-[51px]" ml="ml-[6px]" bar>
        <Ico w={28} h={24}>
          <path d="M0 1h12l2 2.500H28V23H0z" fill="#fdd35c" />
          <path d="M0 1q0-1 1-1h11l2 3-2 1H0z" fill="#dd9c0c" />
          <path d="M5 23.500V15q0-3 3-3h12q3 0 3 3v8.500h-5.500V18h-7v5.500z" fill="#3b96dc" />
        </Ico>
      </Task>
      <Task w="w-[51px]" ml="ml-[10px]">
        <Ico w={30} h={28}>
          <path d="M0 10L15 0l15 10v5H0z" fill="#0f5299" />
          <path d="M3 10h24v10H3z" fill="#f7f7f7" />
          <path d="M0 10l15 9 15-9v16q0 2-2 2H2q-2 0-2-2z" fill="#2aa6ea" />
          <path d="M30 10L2 28h26q2 0 2-2z" fill="#1489d8" />
          <path d="M0 10l15 9L2 28q-2 0-2-2z" fill="#38b5f2" />
        </Ico>
      </Task>
      <Task w="w-[51px]" ml="ml-[11px]">
        <div className="flex size-[30px] items-center justify-center bg-[#067cba]">
          <div className="flex size-[15px] items-center justify-center rounded-full border border-white font-['Liberation_Sans'] text-[5px] font-bold leading-none text-white">DELL</div>
        </div>
      </Task>
      <Task w="w-[51px]" ml="ml-[11px]" bar split>
        <Ico w={30} h={30}>
          <path d="M22 0L30 3.500v23L22 30z" fill="#27a4ee" />
          <path d="M22 0v8L5 22.500 0.500 20.500v-2.300z" fill="#0a6cb5" />
          <path d="M0.500 9L5 6.500 22 21v9L0.500 11.500z" fill="#1787d2" />
        </Ico>
      </Task>
      <Task w="w-[51px]" ml="ml-[11px]">
        <Ico w={30} h={30}>
          <circle cx="15" cy="15" r="14.700" fill="#fff" stroke="#bbb" strokeWidth=".5" />
          <g strokeWidth="3.400" strokeLinecap="round">
            <path d="M12.200 6.500h.01M6.500 12.200h6" stroke="#36c5f0" />
            <path d="M17.800 6v6.300M23.500 12.200h-.01" stroke="#2eb67d" />
            <path d="M17.800 17.800h6M17.800 23.500v-.01" stroke="#ecb22e" />
            <path d="M12.200 17.800V24M6.500 17.800h.01" stroke="#e01e5a" />
          </g>
        </Ico>
      </Task>
      <Task w="w-[51px]" ml="ml-[11px]">
        <div className="relative flex w-[32px]">
          <Ico w={32} h={26}>
            <path d="M1 13l6-6 7 7-6 6z" fill="#1c56b8" />
            <path d="M7.500 20L25 1.500l6 6L13.500 25.500z" fill="#3f97ea" />
          </Ico>
          <div className="absolute left-[21px] top-[12px] flex size-[21px] items-center justify-center rounded-full border border-[#777] bg-[#dbddd7] text-[15px] font-semibold leading-none text-[#111]">2</div>
        </div>
      </Task>
      <Task w="w-[51px]" ml="ml-[11px]">
        <Ico w={26} h={30}>
          <path d="M7 0h12l3 3 3 1-1 4 1.500 4-4 13L13 30 4.500 25l-4-13L2 8 1 4l3-1z" fill="#fb4a1c" />
          <path d="M13 6l4-1 4 4-2 4 1 3-5 3 1.500 3L13 25l-3.500-3L11 19l-5-3 1-3-2-4 4-4z" fill="#fff" />
          <path d="M8 11l3 1.500M18 11l-3 1.500M13 12v5M10.500 17l2.500 1.500 2.500-1.500" stroke="#fb4a1c" strokeWidth="1.300" />
        </Ico>
      </Task>
      <Task w="w-[51px]" ml="ml-[11px]" bar split>
        <Ico w={28} h={28}>
          <rect width="28" height="28" rx="1.500" fill="#2a9fe2" />
          <path d="M12 28l9-14 7 6v8z" fill="#4a62c8" />
          <path d="M0 18l9-8 19 18H0z" fill="#1b3e7c" />
          <circle cx="18.500" cy="6.500" r="2.600" fill="#fff" />
        </Ico>
      </Task>

      <div className="flex-1" />
      <Ico w={27} h={26}>
        <defs><linearGradient id="sun" x1="0" x2=".4" y2="1"><stop stopColor="#ffdf5a" /><stop offset="1" stopColor="#fb9a12" /></linearGradient></defs>
        <circle cx="12.500" cy="13" r="12" fill="url(#sun)" />
        <path d="M12 19.500a4 4 0 1 1 1-7.500 5.500 5.500 0 0 1 10 1.500 3.300 3.300 0 0 1 0 6z" fill="#d2ebfb" stroke="#a9d4f2" strokeWidth=".6" />
      </Ico>
      <span className="ml-[10px] w-[40px] whitespace-nowrap pt-px text-[18px] tracking-[-0.5px]">37°C</span>
      <Ico w={17} h={10} className="ml-[18px]"><path d="M0.700 9.300L8.500 1.200l7.800 8.100" stroke="#222" strokeWidth="1.400" /></Ico>
      <Ico w={21} h={20} className="ml-[11px]">
        <path d="M4 15a4 4 0 0 1 0-8 6.500 6.500 0 0 1 12-1 4.500 4.500 0 0 1 3 9z" fill="#888" stroke="#222" strokeWidth="1.200" />
        <circle cx="14.500" cy="14" r="5.500" fill="#dc2030" />
        <path d="M12.500 12l4 4M16.500 12l-4 4" stroke="#fff" strokeWidth="1.400" />
      </Ico>
      <Ico w={16} h={20} className="ml-[13px]">
        <rect x="1" y="5.500" width="9.500" height="9" rx="1" stroke="#111" strokeWidth="1.300" />
        <path d="M10.500 8.500L14.500 6v8l-4-2.500M2.500 2.500q3.500-2.200 7.500 0M2.500 17.500q3.500 2.200 7.500 0" stroke="#111" strokeWidth="1.200" />
      </Ico>
      <Ico w={14} h={20} className="ml-[13px]">
        <rect x="3" y="0" width="8" height="14" rx="1" fill="#000" />
        <path d="M0.700 10v5.200h12.600V10M7 15v4.300M3 19.300h8" stroke="#000" strokeWidth="1.300" />
      </Ico>
      <Ico w={20} h={12} className="ml-[14px]">
        <rect x="0.700" y="0.700" width="16.500" height="10" stroke="#000" strokeWidth="1.300" />
        <path d="M2.500 2.500h8.500v6.500H2.500zM17.500 3.500h2v4.500h-2z" fill="#000" />
      </Ico>
      <Ico w={17} h={17} className="ml-[12px]">
        <path d="M1 16A15 15 0 0 1 16 1M5 16A11 11 0 0 1 16 5M8.500 16A7.500 7.500 0 0 1 16 8.500" stroke="#222" strokeWidth="1.200" />
        <circle cx="14" cy="14.500" r="1.800" fill="#111" />
      </Ico>
      <Ico w={21} h={18} className="ml-[10px]">
        <path d="M1 6h2.500L8 1.700v14.600L3.500 12H1z" stroke="#111" strokeWidth="1.300" />
        <path d="M11 6q1.800 3 0 6" stroke="#222" strokeWidth="1.200" />
        <path d="M14 4q3 5 0 10M17 1.500q5 7.500 0 15" stroke="#999" strokeWidth="1.200" />
      </Ico>
      <span className="ml-[12px] w-[30px] pt-px text-[14.500px] tracking-[-0.5px]">ENG</span>
      <div className="ml-[12px] w-[84px] whitespace-nowrap text-center text-[14.500px] leading-[23px] tracking-[-0.2px]">
        <div>11:49</div>
        <div className="-ml-[6px] -mr-[4px] tracking-[-0.150px]">19-03-2022</div>
      </div>
      <Ico w={21} h={20} className="ml-[18px] mr-[31px]">
        <path d="M1 1h19v14.500h-6.500L10.500 19l-3-3.500H1z" stroke="#111" strokeWidth="1.400" />
      </Ico>
    </div>
  );
}

export default function App() {
  return (
    <div className="h-[1080px] w-[1920px] overflow-hidden bg-[#8cbf26]">
      <div className="px-[6px] pt-[6px]">
        <TabBar />
        <Toolbar />
        <Page />
      </div>
      <Taskbar />
    </div>
  );
}
